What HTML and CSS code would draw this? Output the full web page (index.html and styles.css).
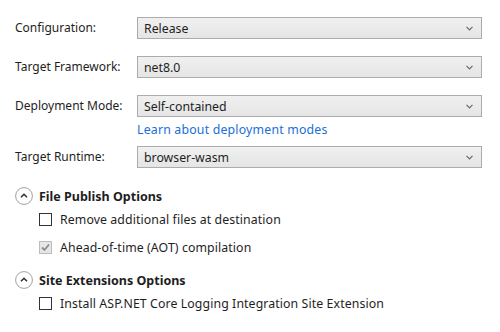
FILE: index.html
```html
<!DOCTYPE html>
<html lang="en">
<head>
    <meta charset="UTF-8">
    <title>Publish Settings</title>
    <link rel="stylesheet" href="styles.css">
</head>
<body>
    <div class="settings">
        <div class="row">
            <div class="label">Configuration:</div>
            <div class="field">
                <div class="select">
                    <span>Release</span>
                    <svg class="caret" width="7" height="5" viewBox="0 0 7 5"><path d="M0.5 0.8 L3.5 3.8 L6.5 0.8" fill="none" stroke="#6a6a6a" stroke-width="1.2"/></svg>
                </div>
            </div>
        </div>
        <div class="row">
            <div class="label">Target Framework:</div>
            <div class="field">
                <div class="select">
                    <span>net8.0</span>
                    <svg class="caret" width="7" height="5" viewBox="0 0 7 5"><path d="M0.5 0.8 L3.5 3.8 L6.5 0.8" fill="none" stroke="#6a6a6a" stroke-width="1.2"/></svg>
                </div>
            </div>
        </div>
        <div class="row row-link">
            <div class="label">Deployment Mode:</div>
            <div class="field">
                <div class="select">
                    <span>Self-contained</span>
                    <svg class="caret" width="7" height="5" viewBox="0 0 7 5"><path d="M0.5 0.8 L3.5 3.8 L6.5 0.8" fill="none" stroke="#6a6a6a" stroke-width="1.2"/></svg>
                </div>
                <a class="link" href="#">Learn about deployment modes</a>
            </div>
        </div>
        <div class="row">
            <div class="label">Target Runtime:</div>
            <div class="field">
                <div class="select">
                    <span>browser-wasm</span>
                    <svg class="caret" width="7" height="5" viewBox="0 0 7 5"><path d="M0.5 0.8 L3.5 3.8 L6.5 0.8" fill="none" stroke="#6a6a6a" stroke-width="1.2"/></svg>
                </div>
            </div>
        </div>

        <div class="section">
            <div class="section-head">
                <svg class="toggle" width="18" height="18" viewBox="0 0 18 18"><circle cx="9" cy="9" r="8.4" fill="#fff" stroke="#a0a0a0" stroke-width="1"/><path d="M6 10.3 L9 7.3 L12 10.3" fill="none" stroke="#333" stroke-width="1.6"/></svg>
                <span>File Publish Options</span>
            </div>
            <div class="option">
                <span class="box"></span>
                <span>Remove additional files at destination</span>
            </div>
            <div class="option">
                <span class="box disabled">
                    <svg width="11" height="11" viewBox="0 0 11 11"><path d="M2 5.5 L4.5 8 L9 2.5" fill="none" stroke="#8c8c8c" stroke-width="1.8"/></svg>
                </span>
                <span>Ahead-of-time (AOT) compilation</span>
            </div>
        </div>

        <div class="section section-2">
            <div class="section-head">
                <svg class="toggle" width="18" height="18" viewBox="0 0 18 18"><circle cx="9" cy="9" r="8.4" fill="#fff" stroke="#a0a0a0" stroke-width="1"/><path d="M6 10.3 L9 7.3 L12 10.3" fill="none" stroke="#333" stroke-width="1.6"/></svg>
                <span>Site Extensions Options</span>
            </div>
            <div class="option">
                <span class="box"></span>
                <span>Install ASP.NET Core Logging Integration Site Extension</span>
            </div>
        </div>
    </div>
</body>
</html>
```
FILE: styles.css
```css
* {
    margin: 0;
    padding: 0;
    box-sizing: border-box;
}

body {
    font-family: 'Noto Sans', 'Open Sans', sans-serif;
    font-size: 12.3px;
    color: #1e1e1e;
    background-color: #fff;
}

.settings {
    padding: 17px 18px 0 15px;
}

.row {
    display: flex;
    align-items: flex-start;
    margin-bottom: 17px;
}

.row-link {
    margin-bottom: 7px;
}

.label {
    width: 122px;
    line-height: 22px;
    height: 22px;
    font-size: 12px;
}

.field {
    width: 345px;
}

.select {
    height: 22px;
    border: 1px solid #acacac;
    background: linear-gradient(#f0f0f0, #e5e5e5);
    display: flex;
    align-items: center;
    justify-content: space-between;
    padding: 0 8px 0 6px;
}

.caret {
    display: block;
}

.link {
    display: block;
    margin-top: 4px;
    line-height: 18px;
    color: #1a6ed8;
    text-decoration: none;
    letter-spacing: 0.2px;
}

.section {
    margin-top: 19px;
}

.section-2 {
    margin-top: 14px;
}

.section-head {
    display: flex;
    align-items: center;
    gap: 6px;
    height: 18px;
    font-weight: 700;
    font-size: 12.5px;
}

.toggle {
    display: block;
}

.option {
    display: flex;
    align-items: center;
    gap: 8px;
    height: 20px;
    margin-top: 4px;
    padding-left: 24px;
    letter-spacing: 0.1px;
}

.option + .option {
    margin-top: 8px;
}

.box {
    width: 13px;
    height: 13px;
    border: 1px solid #333;
    background-color: #fff;
    display: flex;
    align-items: center;
    justify-content: center;
}

.box.disabled {
    border-color: #bcbcbc;
    background-color: #e6e6e6;
}
```
